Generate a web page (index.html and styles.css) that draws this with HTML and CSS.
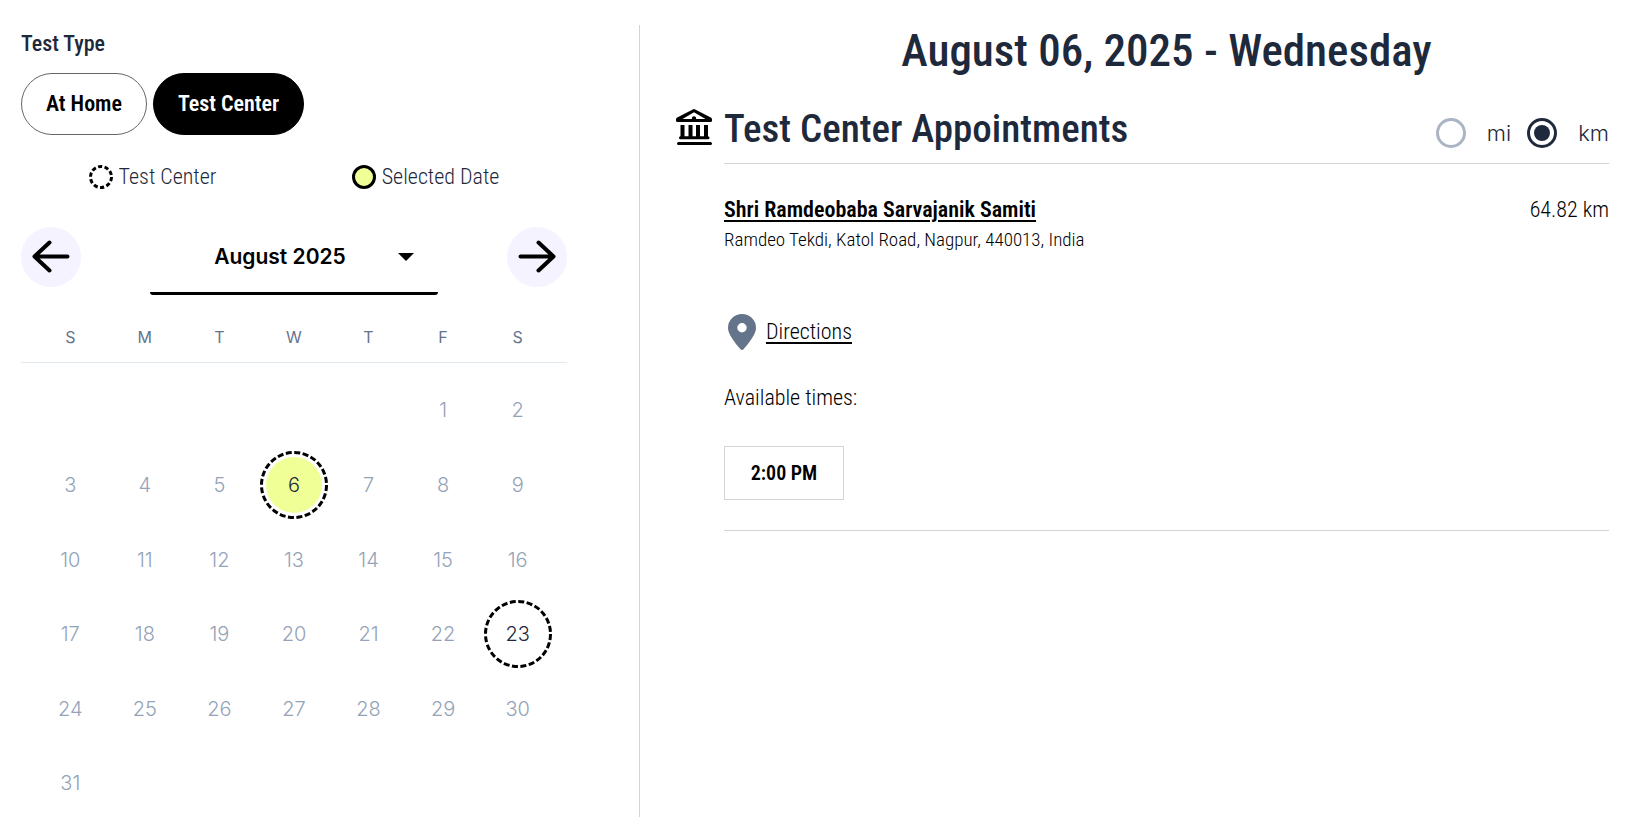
FILE: index.html
```html
<!DOCTYPE html>
<html lang="en">
<head>
<meta charset="utf-8">
<meta name="viewport" content="width=device-width, initial-scale=1">
<title>Test Appointments</title>
<link rel="stylesheet" href="styles.css">
</head>
<body>
<main class="page">
  <section class="picker">
    <h2 class="picker-label">Test Type</h2>
    <div class="types">
      <button type="button" class="pill">At Home</button>
      <button type="button" class="pill pill-active">Test Center</button>
    </div>
    <ul class="legend">
      <li class="legend-item"><svg class="legend-mark" viewBox="0 0 24 24" aria-hidden="true"><circle cx="12" cy="12" r="10.5" fill="none" stroke="#000" stroke-width="3" stroke-dasharray="4.2 2.397"/></svg>Test Center</li>
      <li class="legend-item"><svg class="legend-mark" viewBox="0 0 24 24" aria-hidden="true"><circle cx="12" cy="12" r="10.5" fill="#f0ff96" stroke="#000" stroke-width="3"/></svg>Selected Date</li>
    </ul>
    <div class="month-bar">
      <button type="button" class="round" aria-label="Previous month"><svg viewBox="0 0 60 60" class="arrow"><path d="M46.500 29.500H14M28.500 15.500L13.500 29.500L28.500 43.500"/></svg></button>
      <div class="month">
        <select class="month-select" aria-label="Month"><option>August 2025</option></select>
        <svg class="caret" viewBox="0 0 16 8" aria-hidden="true"><path d="M0 0H16L8 8Z"/></svg>
      </div>
      <button type="button" class="round" aria-label="Next month"><svg viewBox="0 0 60 60" class="arrow"><path d="M13.500 29.500H46M31.500 15.500L46.500 29.500L31.500 43.500"/></svg></button>
    </div>
    <div class="calendar">
    <table class="weekdays">
      <thead><tr><th>S</th><th>M</th><th>T</th><th>W</th><th>T</th><th>F</th><th>S</th></tr></thead>
      <tbody>
        <tr><td></td><td></td><td></td><td></td><td></td><td><div class="day">1</div></td><td><div class="day">2</div></td></tr>
        <tr><td><div class="day">3</div></td><td><div class="day">4</div></td><td><div class="day">5</div></td><td><div class="day"><button type="button" class="open"><svg class="ring" viewBox="0 0 68 68" aria-hidden="true"><circle class="fill" cx="34" cy="34" r="28"/><circle class="dash" cx="34" cy="34" r="32.5"/></svg><span class="num">6</span></button></div></td><td><div class="day">7</div></td><td><div class="day">8</div></td><td><div class="day">9</div></td></tr>
        <tr><td><div class="day">10</div></td><td><div class="day">11</div></td><td><div class="day">12</div></td><td><div class="day">13</div></td><td><div class="day">14</div></td><td><div class="day">15</div></td><td><div class="day">16</div></td></tr>
        <tr><td><div class="day">17</div></td><td><div class="day">18</div></td><td><div class="day">19</div></td><td><div class="day">20</div></td><td><div class="day">21</div></td><td><div class="day">22</div></td><td><div class="day"><button type="button" class="open"><svg class="ring" viewBox="0 0 68 68" aria-hidden="true"><circle class="dash" cx="34" cy="34" r="32.5"/></svg><span class="num">23</span></button></div></td></tr>
        <tr><td><div class="day">24</div></td><td><div class="day">25</div></td><td><div class="day">26</div></td><td><div class="day">27</div></td><td><div class="day">28</div></td><td><div class="day">29</div></td><td><div class="day">30</div></td></tr>
        <tr><td><div class="day">31</div></td><td></td><td></td><td></td><td></td><td></td><td></td></tr>
      </tbody>
    </table>
    </div>
  </section>

  <section class="results">
    <h1 class="date">August 06, 2025 - Wednesday</h1>
    <svg class="bank" viewBox="0 0 36 36" aria-hidden="true">
      <path fill="#000" fill-rule="evenodd" d="M16.800 .4Q18 -.2 19.200 .4L34.800 8.400Q36 9 36 10.400V11.500Q36 13 34.500 13H1.500Q0 13 0 11.500V10.400Q0 9 1.200 8.400ZM18 3.300L6.500 10H16A2.100 2.100 0 1 1 20 10H29.500Z"/>
      <path fill="none" stroke="#000" stroke-width="4" d="M6.500 16V28M14.500 16V28M22 16V28M30 16V28"/>
      <path fill="none" stroke="#000" stroke-width="3" stroke-linecap="round" d="M4.500 28.700H32M2.500 34.500H34.500"/>
    </svg>
    <div class="section-head">
      <h2 class="section-title">Test Center Appointments</h2>
      <div class="units">
        <label class="unit"><input type="radio" name="unit" class="radio">mi</label>
        <label class="unit"><input type="radio" name="unit" class="radio" checked>km</label>
      </div>
    </div>
    <article class="center">
      <div class="center-head">
        <a class="center-name" href="#">Shri Ramdeobaba Sarvajanik Samiti</a>
        <span>64.82 km</span>
      </div>
      <p class="address">Ramdeo Tekdi, Katol Road, Nagpur, 440013, India</p>
      <div class="directions">
        <svg class="pin" viewBox="0 0 28 36" aria-hidden="true"><path fill="#64748b" fill-rule="evenodd" d="M14 0A14 14 0 0 1 28 14C28 20 21 29 15.500 35.300Q14 36.600 12.500 35.300C7 29 0 20 0 14A14 14 0 0 1 14 0ZM14 9A4.700 4.700 0 1 0 14 18.400A4.700 4.700 0 1 0 14 9Z"/></svg>
        <a href="#">Directions</a>
      </div>
      <p class="available">Available times:</p>
      <button type="button" class="time">2:00 PM</button>
    </article>
  </section>
</main>
</body>
</html>
```
FILE: styles.css
```css
* {
  box-sizing: border-box;
}

body {
  margin: 0;
  background: #fff;
  color: #000;
  font-family: "Roboto Condensed", Roboto, sans-serif;
  font-size: 22px;
  font-weight: 350;
  line-height: 32px;
}

h1,
h2,
p,
ul {
  margin: 0;
  padding: 0;
}

button,
select {
  font: inherit;
  color: inherit;
  cursor: pointer;
}

a {
  color: inherit;
  text-decoration-thickness: 2px;
  text-underline-offset: 3px;
}

.page {
  display: grid;
  grid-template-columns: 16fr 25fr;
  min-height: 100vh;
  padding-top: 25px;
}

.picker {
  padding: 3px 72px 0 21px;
  border-right: 1px solid #d4d4d4;
}

.picker-label {
  color: #1e293b;
  font-size: 22px;
  font-weight: 500;
}

.types {
  display: flex;
  gap: 6px;
  margin-top: 13px;
}

.pill {
  padding: 14px 24px;
  border: 1px solid #666;
  border-radius: 31px;
  background: #fff;
  font-size: 22px;
  font-weight: 600;
}

.pill-active {
  border-color: #000;
  background: #000;
  color: #fff;
}

.legend {
  display: flex;
  justify-content: space-around;
  margin-top: 26px;
  color: #1e293b;
  list-style: none;
}

.legend-item {
  display: flex;
  align-items: center;
  gap: 6px;
}

.legend-mark {
  width: 24px;
  height: 24px;
}

.month-bar {
  display: flex;
  justify-content: space-between;
  margin-top: 34px;
}

.round {
  width: 60px;
  height: 60px;
  padding: 0;
  border: 0;
  border-radius: 50%;
  background: #f4f3ff;
}

.arrow {
  display: block;
  width: 100%;
  fill: none;
  stroke: #000;
  stroke-width: 4;
  stroke-linecap: round;
  stroke-linejoin: round;
}

.month {
  position: relative;
  width: 288px;
}

.month-select {
  width: 100%;
  height: 68px;
  padding: 0 28px 6px 0;
  border: 0;
  border-bottom: 3px solid #000;
  border-radius: 3px;
  background: transparent;
  appearance: none;
  font-family: Inter, sans-serif;
  font-size: 21px;
  font-weight: 600;
  text-align: center;
  text-align-last: center;
}

.caret {
  position: absolute;
  top: 26px;
  right: 24px;
  width: 16px;
  pointer-events: none;
}

.calendar {
  margin-top: 26px;
  background: linear-gradient(#e2e8f0, #e2e8f0) 0 41px / 100% 1px no-repeat;
}

.weekdays {
  width: 522px;
  max-width: 100%;
  margin: 0 auto;
  border-collapse: collapse;
  table-layout: fixed;
  font-family: Inter, sans-serif;
  font-size: 20px;
  font-weight: 300;
  color: #94a3b8;
}

.weekdays th {
  height: 52px;
  padding: 0;
  color: #64748b;
  font-size: 16px;
  font-weight: 400;
  line-height: 32px;
  vertical-align: top;
}

.weekdays td {
  padding: 0;
}

.day {
  display: flex;
  align-items: center;
  justify-content: center;
  aspect-ratio: 1;
}

.open {
  display: grid;
  place-items: center;
  width: 68px;
  height: 68px;
  padding: 0;
  border: 0;
  background: none;
  color: #1e293b;
}

.ring,
.num {
  grid-area: 1 / 1;
}

.ring {
  width: 68px;
  height: 68px;
}

.fill {
  fill: #f0ff96;
}

.dash {
  fill: none;
  stroke: #000;
  stroke-width: 3;
  stroke-dasharray: 6 2.508;
}

.results {
  display: grid;
  grid-template-columns: 36px 1fr;
  column-gap: 12px;
  align-content: start;
  padding: 0 31px 40px 36px;
}

.date {
  grid-column: 2;
  color: #1e293b;
  font-size: 45px;
  font-weight: 500;
  line-height: 52px;
  text-align: center;
}

.bank {
  width: 36px;
  height: 36px;
  margin-top: 32px;
}

.section-head {
  display: flex;
  align-items: flex-end;
  justify-content: space-between;
  margin-top: 25px;
  padding-bottom: 7px;
  border-bottom: 1px solid #d4d4d4;
  color: #1e293b;
}

.section-title {
  font-size: 39px;
  font-weight: 500;
  line-height: 54px;
}

.units {
  display: flex;
  gap: 16px;
  padding-bottom: 7px;
}

.unit {
  display: flex;
  align-items: center;
  gap: 21px;
  font-family: Inter, sans-serif;
  font-size: 22px;
  font-weight: 300;
}

.radio {
  display: grid;
  place-items: center;
  width: 30px;
  height: 30px;
  margin: 0;
  border: 3px solid #abb4c4;
  border-radius: 50%;
  appearance: none;
}

.radio:checked {
  border-color: #1e293b;
}

.radio:checked::before {
  content: "";
  width: 16px;
  height: 16px;
  border-radius: 50%;
  background: #1e293b;
}

.center {
  grid-column: 2;
  padding: 30px 0;
  border-bottom: 1px solid #d4d4d4;
}

.center-head {
  display: flex;
  justify-content: space-between;
}

.center-name {
  font-size: 22px;
  font-weight: 600;
}

.address {
  font-size: 19px;
  line-height: 28px;
}

.directions {
  display: flex;
  align-items: center;
  gap: 10px;
  margin: 60px 0 0 4px;
}

.pin {
  width: 28px;
  height: 36px;
}

.available {
  margin-top: 32px;
}

.time {
  display: block;
  min-width: 120px;
  height: 54px;
  margin-top: 32px;
  padding: 0 24px;
  border: 1px solid #d4d4d4;
  background: #fff;
  font-size: 20px;
  font-weight: 600;
}
```
